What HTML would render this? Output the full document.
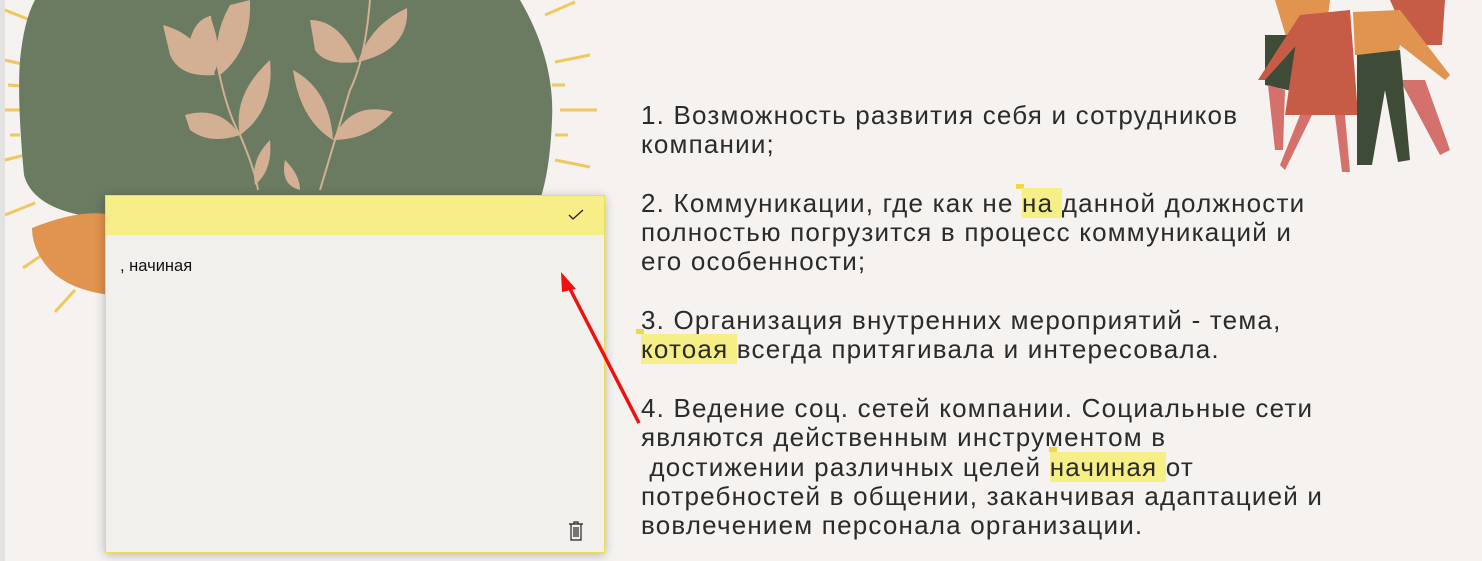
<!DOCTYPE html>
<html><head><meta charset="utf-8"><style>
html,body{margin:0;padding:0;width:1482px;height:561px;overflow:hidden;background:#f5f2ef;position:relative;font-family:"Liberation Sans",sans-serif}
.strip{position:absolute;left:0;top:0;width:5px;height:561px;background:#e4e2e0}
.txt{position:absolute;left:641px;top:101px;font-size:26px;letter-spacing:1.2px;line-height:29.3px;color:#2b2b2b;white-space:pre}
.hl{background:#f6ef87}
.note{position:absolute;left:105px;top:195px;width:498px;height:356px;background:#f1f0ec;border:1px solid #ecdd55;box-shadow:0 2px 10px rgba(0,0,0,0.25)}
.nh{height:39px;background:#f7ee87}
.nt{position:absolute;left:14px;top:61px;font-size:16.5px;color:#111}
</style></head><body>
<div class="strip"></div>
<svg style="position:absolute;left:0;top:0" width="1482" height="561">
 <g stroke="#f0c860" stroke-width="3">
  <line x1="5" y1="10" x2="30" y2="20"/><line x1="5" y1="60" x2="22" y2="64"/><line x1="8" y1="85" x2="22" y2="86"/>
  <line x1="5" y1="110" x2="20" y2="110"/><line x1="10" y1="135" x2="20" y2="135"/><line x1="5" y1="160" x2="25" y2="155"/>
  <line x1="5" y1="215" x2="35" y2="203"/><line x1="23" y1="268" x2="42" y2="255"/><line x1="55" y1="312" x2="75" y2="290"/>
  <line x1="545" y1="15" x2="575" y2="2"/><line x1="555" y1="62" x2="590" y2="55"/><line x1="560" y1="110" x2="597" y2="110"/>
  <line x1="555" y1="160" x2="590" y2="167"/><line x1="555" y1="135" x2="568" y2="135"/><line x1="552" y1="85" x2="565" y2="85"/>
 </g>
 <path d="M35 0 L520 0 Q555 60 552 120 Q550 170 540 200 L80 215 Q32 205 24 175 Q17 100 20 60 Q24 20 35 0Z" fill="#6a7b62"/>
 <path d="M32 228 Q90 205 120 218 L110 295 Q70 290 50 270 Q32 250 32 228Z" fill="#e0944f"/>
 <g fill="#d3af93">
  <path d="M210 16 Q225 55 213 75 Q195 65 190 40 Q195 20 210 16Z"/>
  <path d="M163 25 Q200 35 215 75 Q180 78 170 55Z"/>
  <path d="M250 0 Q252 50 220 75 Q210 40 230 5Z"/>
  <path d="M270 60 Q275 110 240 135 Q232 95 270 60Z"/>
  <path d="M185 115 Q220 105 240 135 Q210 145 190 130Z"/>
  <path d="M310 20 Q340 20 358 62 Q325 66 315 50Z"/>
  <path d="M407 8 Q410 50 358 62 Q370 25 407 8Z"/>
  <path d="M293 70 Q330 90 333 140 Q300 120 293 70Z"/>
  <path d="M393 112 Q370 140 333 140 Q350 100 393 112Z"/>
  <path d="M270 140 Q273 170 255 185 Q250 160 270 140Z"/>
  <path d="M285 160 Q300 175 300 190 Q280 185 285 160Z"/>
 </g>
 <g stroke="#d3af93" stroke-width="2" fill="none"><path d="M210 16 Q220 100 240 135 Q255 170 258 190"/><path d="M370 0 Q365 60 350 90 Q335 140 320 190"/></g>
 <g>
  <path d="M1275 0 L1330 0 L1325 40 L1290 50Z" fill="#e0944f"/>
  <path d="M1390 0 L1445 0 L1442 45 L1410 45Z" fill="#c65c45"/>
  <path d="M1265 35 L1310 35 L1310 95 L1265 85Z" fill="#3e4b37"/>
  <path d="M1268 85 L1285 90 L1283 150 L1275 150Z M1400 80 L1425 80 L1450 150 L1440 155Z" fill="#d4716c"/>
  <path d="M1300 15 L1350 10 L1358 115 L1285 115Z" fill="#c65c45"/>
  <path d="M1300 15 L1258 80 L1265 80 L1310 30Z" fill="#c65c45"/>
  <path d="M1300 115 L1312 115 L1285 170 L1280 165Z M1335 115 L1345 115 L1350 172 L1342 172Z" fill="#d4716c"/>
  <path d="M1353 12 L1400 10 L1450 75 L1445 80 L1400 45 L1398 55 L1355 55Z" fill="#e0944f"/>
  <path d="M1357 55 L1400 50 L1410 160 L1398 162 L1385 90 L1372 165 L1357 165Z" fill="#3e4b37"/>
 </g>
 <g fill="#f0d84a"><rect x="1016" y="184" width="8" height="5"/><rect x="636" y="329" width="8" height="5"/><rect x="1049" y="447" width="8" height="5"/></g>
</svg>
<div class="txt">1. Возможность развития себя и сотрудников
компании;

2. Коммуникации, где как не <span class="hl">на </span>данной должности
полностью погрузится в процесс коммуникаций и
его особенности;

3. Организация внутренних мероприятий - тема,
<span class="hl">котоая </span>всегда притягивала и интересовала.

4. Ведение соц. сетей компании. Социальные сети
являются действенным инструментом в
 достижении различных целей <span class="hl">начиная </span>от
потребностей в общении, заканчивая адаптацией и
вовлечением персонала организации.</div>
<div class="note">
 <div class="nh"></div>
 <svg style="position:absolute;left:462px;top:13px" width="16" height="12"><path d="M1 6 L5 10 L15 1" stroke="#222" stroke-width="1.3" fill="none"/></svg>
 <div class="nt">, начиная</div>
 <svg style="position:absolute;left:462px;top:325px" width="16" height="20"><g stroke="#222" stroke-width="1.2" fill="none"><path d="M1 3 H15 M6 3 V1 H10 V3 M3 3 V19 H13 V3 M6 6 V16 M8 6 V16 M10 6 V16"/></g></svg>
</div>
<svg style="position:absolute;left:0;top:0" width="1482" height="561">
 <line x1="639" y1="423" x2="568" y2="285" stroke="#f01010" stroke-width="3.5"/>
 <path d="M561 272 L576 289 L562 292Z" fill="#f01010"/>
</svg>
</body></html>
